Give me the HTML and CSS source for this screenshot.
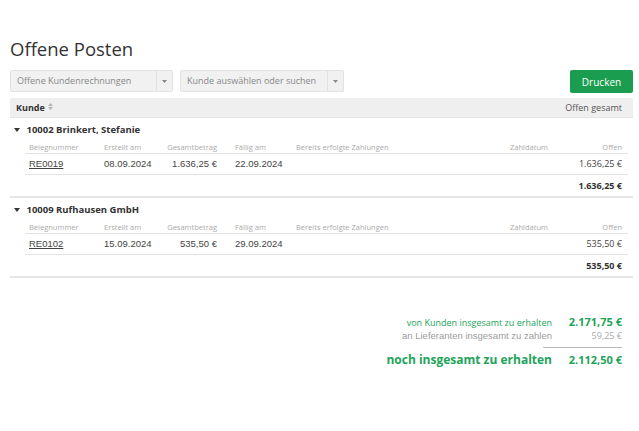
FILE: index.html
```html
<!DOCTYPE html>
<html lang="de">
<head>
    <meta charset="UTF-8">
    <meta name="viewport" content="width=device-width, initial-scale=1.0">
    <title>Offene Posten</title>
    <link rel="stylesheet" href="styles.css">
</head>
<body>

    <div class="page">
        <h1 class="title">Offene Posten</h1>

        <div class="toolbar">
            <div class="select select-type">
                <span class="select-label">Offene Kundenrechnungen</span>
                <span class="select-arrow">
                    <svg width="5" height="3" viewBox="0 0 5 3"><path d="M0 0h5L2.5 3z" fill="#888"/></svg>
                </span>
            </div>
            <div class="select select-customer">
                <span class="select-label">Kunde auswählen oder suchen</span>
                <span class="select-arrow">
                    <svg width="5" height="3" viewBox="0 0 5 3"><path d="M0 0h5L2.5 3z" fill="#888"/></svg>
                </span>
            </div>
            <button class="btn-print">Drucken</button>
        </div>

        <div class="list-head">
            <span class="sortable">Kunde
                <svg width="5" height="7" viewBox="0 0 5 7"><path d="M0 3h5L2.5 0z M0 4h5L2.5 7z" fill="#b5b5b5"/></svg>
            </span>
            <span>Offen gesamt</span>
        </div>

        <div class="customer">
            <div class="customer-name">
                <svg class="caret" width="6" height="4" viewBox="0 0 6 4"><path d="M0 0h6L3 4z" fill="#333"/></svg>
                10002 Brinkert, Stefanie
            </div>
            <div class="invoices">
                <div class="inv-row inv-head">
                    <span>Belegnummer</span>
                    <span>Erstellt am</span>
                    <span class="num">Gesamtbetrag</span>
                    <span>Fällig am</span>
                    <span>Bereits erfolgte Zahlungen</span>
                    <span>Zahldatum</span>
                    <span class="open">Offen</span>
                </div>
                <div class="inv-row">
                    <a href="#" class="inv-link">RE0019</a>
                    <span class="arial">08.09.2024</span>
                    <span class="num arial">1.636,25 €</span>
                    <span class="arial">22.09.2024</span>
                    <span></span>
                    <span></span>
                    <span class="open">1.636,25 €</span>
                </div>
                <div class="inv-total">1.636,25 €</div>
            </div>
        </div>

        <div class="customer">
            <div class="customer-name">
                <svg class="caret" width="6" height="4" viewBox="0 0 6 4"><path d="M0 0h6L3 4z" fill="#333"/></svg>
                10009 Rufhausen GmbH
            </div>
            <div class="invoices">
                <div class="inv-row inv-head">
                    <span>Belegnummer</span>
                    <span>Erstellt am</span>
                    <span class="num">Gesamtbetrag</span>
                    <span>Fällig am</span>
                    <span>Bereits erfolgte Zahlungen</span>
                    <span>Zahldatum</span>
                    <span class="open">Offen</span>
                </div>
                <div class="inv-row">
                    <a href="#" class="inv-link">RE0102</a>
                    <span class="arial">15.09.2024</span>
                    <span class="num arial">535,50 €</span>
                    <span class="arial">29.09.2024</span>
                    <span></span>
                    <span></span>
                    <span class="open">535,50 €</span>
                </div>
                <div class="inv-total">535,50 €</div>
            </div>
        </div>

        <div class="summary">
            <div class="sum-row sum-in">
                <span class="sum-label">von Kunden insgesamt zu erhalten</span>
                <span class="sum-value">2.171,75 €</span>
            </div>
            <div class="sum-row sum-out">
                <span class="sum-label">an Lieferanten insgesamt zu zahlen</span>
                <span class="sum-value">59,25 €</span>
            </div>
            <div class="sum-line"></div>
            <div class="sum-row sum-total">
                <span class="sum-label">noch insgesamt zu erhalten</span>
                <span class="sum-value">2.112,50 €</span>
            </div>
        </div>
    </div>

</body>
</html>
```

FILE: styles.css
```css
body {
    margin: 0;
    background-color: #fff;
    font-family: "Open Sans", Arial, sans-serif;
    color: #333;
}

.page {
    padding: 37px 6px 0 10px;
}

.title {
    margin: 0;
    font-size: 18.5px;
    line-height: 24px;
    font-weight: normal;
    color: #333;
}

/* toolbar */

.toolbar {
    display: flex;
    align-items: flex-start;
    gap: 7px;
    margin-top: 9px;
}

.select {
    display: flex;
    height: 22px;
    box-sizing: border-box;
    background-color: #f1f1f1;
    border: 1px solid #e2e2e2;
    border-radius: 2px;
    font-size: 9px;
    color: #888;
}

.select-type {
    width: 163px;
}

.select-customer {
    width: 164px;
}

.select-label {
    flex: 1;
    padding-left: 6px;
    line-height: 20px;
    white-space: nowrap;
}

.select-arrow {
    width: 15px;
    display: flex;
    align-items: center;
    justify-content: center;
    border-left: 1px solid #e2e2e2;
}

.btn-print {
    margin-left: auto;
    width: 63px;
    height: 23px;
    padding: 0;
    border: none;
    border-radius: 2px;
    background-color: #1b9d4f;
    color: #fff;
    font-family: "Open Sans", Arial, sans-serif;
    font-size: 10px;
}

/* list */

.list-head {
    display: flex;
    justify-content: space-between;
    align-items: center;
    margin-top: 5px;
    height: 20px;
    box-sizing: border-box;
    padding: 0 11px 0 6px;
    background-color: #efefef;
    border-bottom: 1px solid #e4e4e4;
    font-size: 9px;
    color: #555;
}

.sortable {
    font-weight: bold;
    color: #333;
}

.sortable svg {
    margin-left: 1px;
    vertical-align: 1px;
}

.customer {
    border-bottom: 2px solid #e6e6e6;
}

.customer-name {
    height: 23px;
    line-height: 23px;
    padding-left: 4px;
    font-size: 9.5px;
    font-weight: bold;
    color: #333;
}

.caret {
    margin-right: 4px;
    vertical-align: 1px;
}

.invoices {
    margin: 0 5px 0 15px;
}

.inv-row {
    display: grid;
    grid-template-columns: 75px 62px 69px 61px 1fr 66px 56px;
    border-bottom: 1px solid #e4e4e4;
    height: 21px;
    box-sizing: border-box;
    line-height: 20px;
    font-size: 9px;
    color: #444;
}

.inv-row > * {
    padding-left: 4px;
    white-space: nowrap;
}

.inv-row .num {
    text-align: right;
    padding-right: 14px;
}

.inv-row .open {
    text-align: right;
    padding-right: 6px;
}

.inv-head {
    height: 13px;
    line-height: 12px;
    font-size: 7.5px;
    color: #aaa;
}

.arial,
.inv-link {
    font-family: "Liberation Sans", Arial, sans-serif;
    font-size: 9.5px;
}

.inv-link {
    color: #444;
    text-decoration: underline;
}

.inv-total {
    height: 21px;
    line-height: 21px;
    text-align: right;
    padding-right: 6px;
    font-size: 9px;
    font-weight: bold;
    color: #333;
}

/* summary */

.summary {
    display: flex;
    flex-direction: column;
    align-items: flex-end;
    margin-top: 37px;
    padding-right: 11px;
}

.sum-row {
    display: flex;
    align-items: baseline;
    line-height: 13px;
}

.sum-value {
    width: 60px;
    margin-left: 10px;
    text-align: right;
    white-space: nowrap;
}

.sum-in {
    color: #22a35a;
    font-size: 9px;
}

.sum-in .sum-value {
    font-size: 11px;
    font-weight: bold;
}

.sum-out {
    color: #9c9c9c;
}

.sum-out .sum-label {
    font-family: "Liberation Sans", Arial, sans-serif;
    font-size: 9.5px;
}

.sum-out .sum-value {
    font-size: 9px;
    color: #aaa;
}

.sum-line {
    width: 79px;
    height: 1px;
    margin: 5px 0 4px;
    background-color: #bbb;
}

.sum-total {
    line-height: 16px;
    color: #22a35a;
    font-weight: bold;
    font-size: 12px;
}

.sum-total .sum-value {
    font-size: 11px;
}
```
